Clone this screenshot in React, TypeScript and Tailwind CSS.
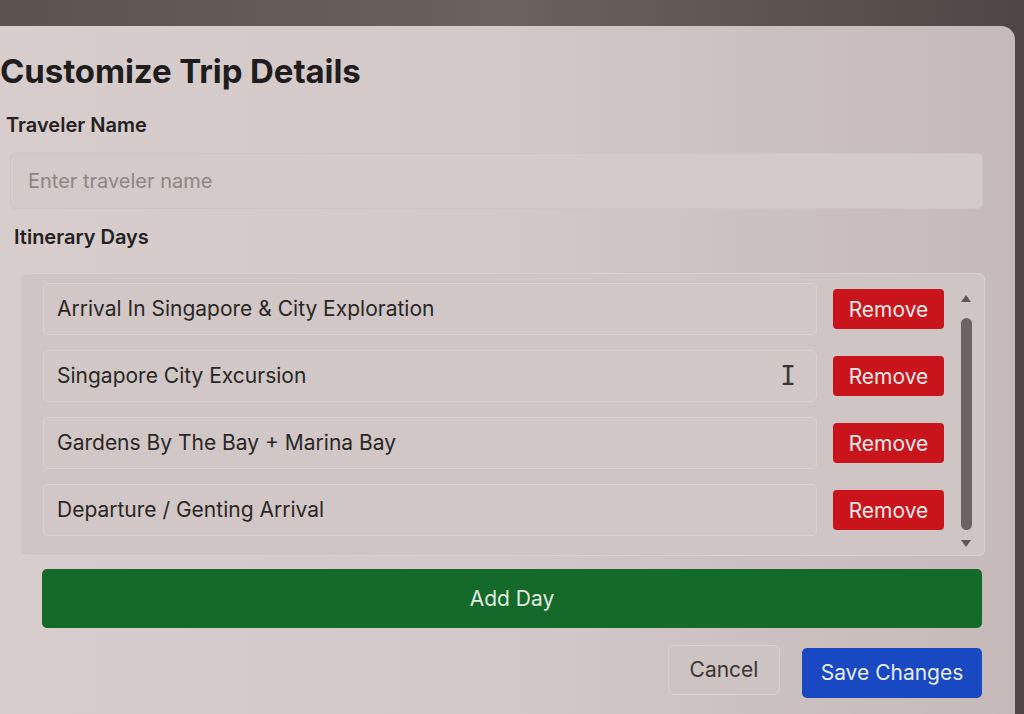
import React from "react";

const days = [
  "Arrival In Singapore & City Exploration",
  "Singapore City Excursion",
  "Gardens By The Bay + Marina Bay",
  "Departure / Genting Arrival",
];

export default function App() {
  return (
    <div
      className="w-[1024px] h-[714px] overflow-hidden bg-linear-to-r from-[#5c5350] via-[#6a625e] to-[#4f4745] pt-[26px] pr-[9px] flex flex-col"
      style={{ fontFamily: "Inter, 'Noto Sans', sans-serif" }}
    >
      <div className="flex-1 rounded-tr-[14px] bg-linear-to-r from-[#d7cdcc] via-[#d2c8c7] to-[#c5bab9] flex flex-col text-[#222020]">
        <h1 className="mt-[25px] ml-0 text-[33px] leading-[40px] font-bold tracking-[-0.1px] text-[#1f1d1d]">
          Customize Trip Details
        </h1>
        <label className="mt-[20px] ml-[6px] text-[20px] leading-[28px] font-semibold text-[#232121]">
          Traveler Name
        </label>
        <div className="mt-[14px] ml-[10px] mr-[32px] h-[56px] rounded-[6px] border border-[#cec4c3] bg-[#d4cac9] flex items-center pl-[17px]">
          <span className="text-[20px] text-[#8d8685]">Enter traveler name</span>
        </div>
        <label className="mt-[14px] ml-[14px] text-[20px] leading-[28px] font-semibold text-[#232121]">
          Itinerary Days
        </label>
        <div className="mt-[22px] ml-[20px] mr-[30px] h-[283px] rounded-[6px] border border-[#d9d0cf] bg-[#cfc5c4] flex pl-[22px] pt-[9px] pr-[6px]">
          <div className="flex-1 flex flex-col gap-[15px]">
            {days.map((d, i) => (
              <div key={d} className="flex items-center gap-[16px]">
                <div className="relative flex-1 h-[52px] rounded-[5px] border border-[#dad2d1] bg-[#d1c7c6] flex items-center pl-[13px]">
                  <span className="text-[21px] text-[#2a2727]">{d}</span>
                  {i === 1 && (
                    <span
                      className="absolute right-[20px] top-[12px] text-[26px] leading-none text-[#3a3636] font-light"
                      style={{ fontFamily: "'DejaVu Sans Mono', monospace" }}
                    >
                      I
                    </span>
                  )}
                </div>
                <button className="w-[111px] h-[40px] rounded-[4px] bg-[#c9141c] text-[21px] leading-none flex items-center justify-center text-[#f6e9ea]">
                  Remove
                </button>
              </div>
            ))}
          </div>
          <div className="w-[24px] ml-[10px] flex flex-col items-center pt-[12px] pb-[8px]">
            <svg width="10" height="7" viewBox="0 0 10 7">
              <path d="M5 0 L10 7 L0 7 Z" fill="#5e5857" />
            </svg>
            <div className="mt-[16px] flex-1 w-[11px] rounded-full bg-[#6a6362]" />
            <svg className="mt-[10px]" width="10" height="7" viewBox="0 0 10 7">
              <path d="M0 0 L10 0 L5 7 Z" fill="#5e5857" />
            </svg>
          </div>
        </div>
        <button className="mt-[13px] ml-[42px] mr-[33px] h-[59px] rounded-[5px] bg-[#146a29] text-[#e2ebe2] text-[21px] flex items-center justify-center">
          Add Day
        </button>
        <div className="mt-[17px] mr-[33px] flex justify-end gap-[22px]">
          <button className="w-[112px] h-[50px] rounded-[6px] border border-[#d8cfce] bg-[#cdc3c2] text-[21px] text-[#3b3737]">
            Cancel
          </button>
          <button className="w-[180px] h-[50px] rounded-[5px] bg-[#1848c2] text-[21px] text-[#e6ebf7] mt-[3px]">
            Save Changes
          </button>
        </div>
      </div>
    </div>
  );
}
